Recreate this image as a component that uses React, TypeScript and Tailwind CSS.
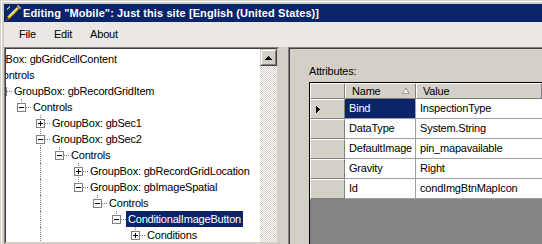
import React from "react";

type Node = {
  level: number;
  text: string;
  expander: "+" | "-";
  next?: boolean;
  cont?: number[];
  selected?: boolean;
};

const treeRows: Node[] = [
  { level: 0, text: "GroupBox: gbGridCellContent", expander: "-" },
  { level: 1, text: "Controls", expander: "-" },
  { level: 2, text: "GroupBox: gbRecordGridItem", expander: "-" },
  { level: 3, text: "Controls", expander: "-" },
  { level: 4, text: "GroupBox: gbSec1", expander: "+", next: true },
  { level: 4, text: "GroupBox: gbSec2", expander: "-", next: true },
  { level: 5, text: "Controls", expander: "-", cont: [4] },
  { level: 6, text: "GroupBox: gbRecordGridLocation", expander: "+", next: true, cont: [4] },
  { level: 6, text: "GroupBox: gbImageSpatial", expander: "-", cont: [4] },
  { level: 7, text: "Controls", expander: "-", cont: [4] },
  { level: 8, text: "ConditionalImageButton", expander: "-", cont: [4], selected: true },
  { level: 9, text: "Conditions", expander: "+", cont: [4] },
];

const attributes = [
  { name: "Bind", value: "InspectionType" },
  { name: "DataType", value: "System.String" },
  { name: "DefaultImage", value: "pin_mapavailable" },
  { name: "Gravity", value: "Right" },
  { name: "Id", value: "condImgBtnMapIcon" },
];

function PencilIcon() {
  return (
    <svg width="16" height="16" viewBox="0 0 16 16" shapeRendering="crispEdges">
      <path d="M1 4 L4 1 L5 2 L2 5 Z" fill="#9aa4b8" />
      <path d="M2 15 L3 11 L12 2 L14 4 L5 13 Z" fill="#f7c531" stroke="#b06a10" strokeWidth="1" />
      <path d="M4 11 L12 3" stroke="#fff4b0" strokeWidth="1" />
      <path d="M11 1 L13 0 L16 3 L15 5 Z" fill="#8a93a8" />
      <path d="M1 15 L2 12 L4 14 Z" fill="#3a3a3a" />
    </svg>
  );
}

function Expander({ node }: { node: Node }) {
  return (
    <svg width="18" height="16" viewBox="0 0 18 16" shapeRendering="crispEdges" className="shrink-0">
      <line x1="8.5" y1="0" x2="8.5" y2={node.next ? 16 : 8} stroke="#808080" strokeDasharray="1 1" />
      <line x1="9" y1="8.5" x2="18" y2="8.5" stroke="#808080" strokeDasharray="1 1" />
      <rect x="4.5" y="4.5" width="8" height="8" fill="#fff" stroke="#808080" />
      <line x1="6" y1="8.5" x2="11" y2="8.5" stroke="#000" />
      {node.expander === "+" && <line x1="8.5" y1="6" x2="8.5" y2="11" stroke="#000" />}
    </svg>
  );
}

function TreeRow({ node }: { node: Node }) {
  return (
    <div className="flex h-4 items-center">
      {Array.from({ length: node.level }).map((_, i) => (
        <div key={i} className="h-4 w-[19px] shrink-0">
          {node.cont?.includes(i) && (
            <div className="ml-[8px] h-4 border-l border-dotted border-[#808080]" />
          )}
        </div>
      ))}
      <Expander node={node} />
      <span
        className={
          node.selected
            ? "whitespace-nowrap bg-[#0a246a] px-[2px] leading-4 text-white"
            : "whitespace-nowrap px-[2px] leading-4"
        }
      >
        {node.text}
      </span>
    </div>
  );
}

export default function App() {
  return (
    <div className="h-[244px] w-[542px] overflow-hidden bg-[#d4d0c8] pl-px pt-px font-['Liberation_Sans',Arial,sans-serif] text-[11px] tracking-[-0.2px] text-black">
      <div className="flex h-full flex-col border-l border-t border-white pl-[2px] pt-[2px]">
        {/* title bar */}
        <div className="flex h-[18px] shrink-0 items-center bg-[#0a246a]">
          <div className="ml-px">
            <PencilIcon />
          </div>
          <span className="ml-[2px] whitespace-nowrap text-[11px] font-bold tracking-[0.1px] text-white">
            Editing "Mobile": Just this site [English (United States)]
          </span>
        </div>

        {/* menu */}
        <div className="flex h-[25px] shrink-0 items-center bg-[#ebe8e4]">
          <span className="ml-[15px]">File</span>
          <span className="ml-[18px]">Edit</span>
          <span className="ml-[18px]">About</span>
        </div>

        <div className="flex min-h-0 flex-1">
          {/* tree */}
          <div className="flex w-[275px] shrink-0 border border-b-[#d4d0c8] border-l-[#808080] border-r-[#d4d0c8] border-t-[#808080]">
            <div className="flex flex-1 border border-b-[#d4d0c8] border-l-[#404040] border-r-[#d4d0c8] border-t-[#404040]">
              <div className="min-w-0 flex-1 overflow-hidden bg-white pt-[2px]">
                <div className="-ml-[50px] flex flex-col">
                  {treeRows.map((n, i) => (
                    <TreeRow key={i} node={n} />
                  ))}
                </div>
              </div>
              <div className="flex w-[17px] shrink-0 flex-col bg-[repeating-conic-gradient(#d4d0c8_0%_25%,#ffffff_0%_50%)] bg-size-[2px_2px]">
                <div className="h-[17px] border border-b-[#404040] border-l-[#d4d0c8] border-r-[#404040] border-t-[#d4d0c8] bg-[#d4d0c8]">
                  <div className="flex h-full items-center justify-center border border-b-[#808080] border-l-white border-r-[#808080] border-t-white">
                    <svg width="7" height="4" viewBox="0 0 7 4" shapeRendering="crispEdges">
                      <path d="M3.5 0 L7 4 L0 4 Z" fill="#000" />
                    </svg>
                  </div>
                </div>
              </div>
            </div>
          </div>

          <div className="w-[9px] shrink-0" />

          {/* attributes */}
          <div className="flex flex-1 border-l border-t border-[#808080]">
            <div className="flex flex-1 flex-col border-l border-t border-[#404040] pl-[19px] pt-[16px]">
              <div className="h-[13px] leading-[13px]">Attributes:</div>
              <div className="mt-[4px] flex flex-1 flex-col border-l border-t border-black bg-[#858383]">
                <div className="flex h-[16px] shrink-0">
                  <div className="w-[35px] shrink-0 border border-b-[#808080] border-l-white border-r-[#808080] border-t-white bg-[#d4d0c8]" />
                  <div className="flex w-[71px] shrink-0 items-center justify-between border border-b-[#808080] border-l-white border-r-[#808080] border-t-white bg-[#d4d0c8] pl-[6px] pr-[5px]">
                    <span>Name</span>
                    <svg width="8" height="6" viewBox="0 0 8 6" shapeRendering="crispEdges">
                      <path d="M4 0.5 L7.5 5.5 L0.5 5.5 Z" fill="#ffffff" stroke="#a0a0a0" />
                    </svg>
                  </div>
                  <div className="flex flex-1 items-center border border-b-[#808080] border-l-white border-r-[#808080] border-t-white bg-[#d4d0c8] pl-[6px]">
                    Value
                  </div>
                </div>
                {attributes.map((a, i) => (
                  <div key={a.name} className="flex h-[20px] shrink-0">
                    <div className="flex w-[35px] shrink-0 items-center border border-b-[#808080] border-l-white border-r-[#808080] border-t-white bg-[#d4d0c8] pl-[5px]">
                      {i === 0 && (
                        <svg width="4" height="7" viewBox="0 0 4 7" shapeRendering="crispEdges">
                          <path d="M0 0 L4 3.5 L0 7 Z" fill="#000" />
                        </svg>
                      )}
                    </div>
                    <div
                      className={
                        i === 0
                          ? "flex w-[71px] shrink-0 items-center border-b border-r border-[#a0a0a0] bg-[#0a246a] pl-[4px] text-white"
                          : "flex w-[71px] shrink-0 items-center border-b border-r border-[#a0a0a0] bg-white pl-[4px]"
                      }
                    >
                      {a.name}
                    </div>
                    <div className="flex flex-1 items-center whitespace-nowrap border-b border-[#a0a0a0] bg-white pl-[4px]">
                      {a.value}
                    </div>
                  </div>
                ))}
              </div>
            </div>
          </div>
        </div>
      </div>
    </div>
  );
}
